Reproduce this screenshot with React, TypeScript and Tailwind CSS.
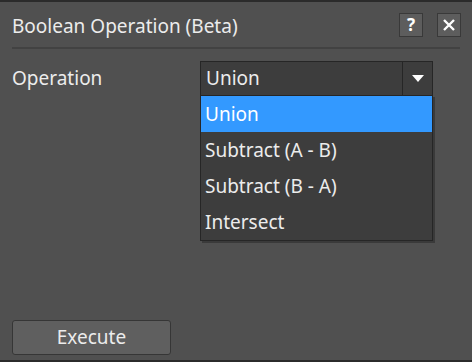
export default function App() {
  const options = ["Union", "Subtract (A - B)", "Subtract (B - A)", "Intersect"];
  const selected = 0;

  return (
    <div
      className="relative w-[472px] h-[362px] bg-[#505050] border-t-2 border-b-2 border-[#2b2b2b] text-[#ececec] overflow-hidden flex flex-col"
      style={{ fontFamily: '"Noto Sans", "Open Sans", sans-serif' }}
    >
      {/* title bar */}
      <div className="flex items-center h-[47px] mx-3 border-b-2 border-[#424242] pt-[4px]">
        <div className="flex-1 text-[19px] leading-none">Boolean Operation (Beta)</div>
        <button className="w-6 h-6 mt-[-4px] bg-[#5d5d5d] border border-[#393939] text-white text-[17px] font-bold leading-none flex items-center justify-center">
          ?
        </button>
        <button className="ml-[14px] mr-[-1px] mt-[-4px] w-6 h-6 bg-[#5d5d5d] border border-[#393939] flex items-center justify-center">
          <svg width="14" height="14" viewBox="0 0 14 14">
            <path d="M2 2 L12 12 M12 2 L2 12" stroke="#fff" strokeWidth="2.4" />
          </svg>
        </button>
      </div>

      {/* body */}
      <div className="flex-1 flex flex-col px-3">
        <div className="flex items-start mt-[12px]">
          <div className="w-[188px] text-[19px] leading-[34px]">Operation</div>
          <div className="relative w-[233px]">
            <div className="flex h-[35px] bg-[#3d3d3d] border border-[#262626]">
              <div className="flex-1 px-[5px] text-[19px] leading-[33px]">{options[selected]}</div>
              <div className="w-[30px] border-l border-[#262626] flex items-center justify-center">
                <svg width="12" height="8" viewBox="0 0 12 8">
                  <path d="M0 0 H12 L6 7 Z" fill="#fff" />
                </svg>
              </div>
            </div>
            <div className="absolute left-0 top-[34px] w-[233px] bg-[#3d3d3d] border border-[#262626] shadow-[2px_2px_0_#3a3a3a]">
              {options.map((o, i) => (
                <div
                  key={o}
                  className={
                    i === selected
                      ? "h-[36px] px-[4px] text-[19px] leading-[36px] bg-[#3399ff] text-white"
                      : "h-[36px] px-[4px] text-[19px] leading-[36px]"
                  }
                >
                  {o}
                </div>
              ))}
            </div>
          </div>
        </div>

        <div className="mt-auto mb-[5px]">
          <button className="w-[159px] h-[35px] bg-[#5f5f5f] border border-[#363636] rounded-[3px] text-[19px] text-[#ececec]">
            Execute
          </button>
        </div>
      </div>
    </div>
  );
}
